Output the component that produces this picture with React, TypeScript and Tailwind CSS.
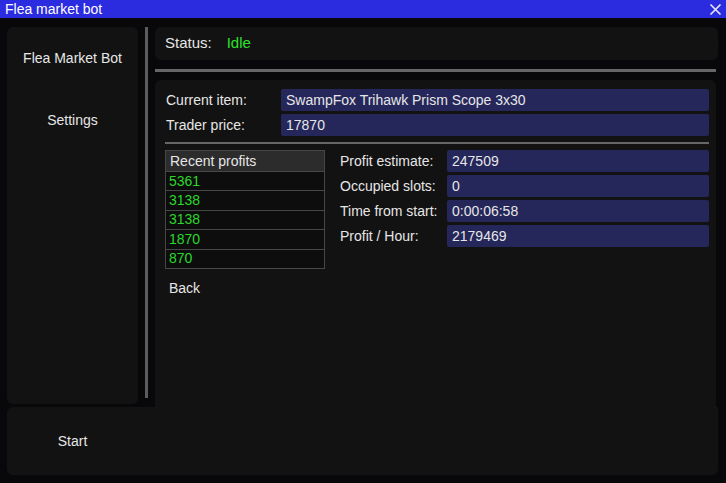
import React from "react";

const recentProfits = ["5361", "3138", "3138", "1870", "870"];

const stats = [
  { label: "Profit estimate:", value: "247509" },
  { label: "Occupied slots:", value: "0" },
  { label: "Time from start:", value: "0:00:06:58" },
  { label: "Profit / Hour:", value: "2179469" },
];

function Field({ value }: { value: string }) {
  return (
    <div className="flex-1 h-full bg-[#25275a] rounded-[2px] flex items-center pl-[5px] text-[14px] text-[#e6e6e6]">
      {value}
    </div>
  );
}

function App() {
  return (
    <div
      className="w-[726px] h-[483px] bg-[#08080a] flex flex-col text-[#e6e6e6] overflow-hidden"
      style={{ fontFamily: '"Liberation Sans", Arial, sans-serif' }}
    >
      {/* title bar */}
      <div className="h-[18px] bg-[#2b2bdf] flex items-center justify-between pl-[5px] pr-[4px]">
        <span className="text-[14px] text-white leading-none">Flea market bot</span>
        <svg width="13" height="13" viewBox="0 0 13 13">
          <path d="M1.5 1.5 L11.5 11.5 M11.5 1.5 L1.5 11.5" stroke="#e8e8f8" strokeWidth="1.6" />
        </svg>
      </div>

      <div className="flex-1 flex flex-col pl-[7px] pr-[8px] pt-[9px] pb-[8px]">
        <div className="flex-1 flex">
          {/* sidebar */}
          <div className="w-[131px] mb-[3px] bg-[#121212] rounded-md flex flex-col items-center pt-[23px] text-[14px]">
            <div className="h-[17px] leading-[17px]">Flea Market Bot</div>
            <div className="h-[17px] leading-[17px] mt-[45px]">Settings</div>
          </div>

          <div className="w-[3px] ml-[7px] mr-[7px] mb-[9px] bg-[#5c5c5c]" />

          <div className="flex-1 flex flex-col">
            <div className="h-[33px] bg-[#121212] rounded-md flex items-center pl-[10px] text-[15px]">
              <span>Status:</span>
              <span className="ml-[15px] text-[#2ee02e]">Idle</span>
            </div>

            <div className="h-[3px] mt-[9px] mr-[2px] bg-[#666666]" />

            <div className="flex-1 mt-[8px] mr-[2px] bg-[#121212] rounded-t-md pl-[11px] pr-[7px] pt-[9px] text-[14px]">
              <div className="flex items-center h-[22px]">
                <div className="w-[115px]">Current item:</div>
                <Field value="SwampFox Trihawk Prism Scope 3x30" />
              </div>
              <div className="flex items-center h-[22px] mt-[3px]">
                <div className="w-[115px]">Trader price:</div>
                <Field value="17870" />
              </div>

              <div className="h-[2px] mt-[6px] -ml-[1px] bg-[#666666]" />

              <div className="flex mt-[6px]">
                <div className="w-[160px] -ml-[1px] border border-[#474747]">
                  <div className="h-[20px] bg-[#2c2c2c] flex items-center pl-[4px]">Recent profits</div>
                  {recentProfits.map((p, i) => (
                    <div
                      key={i}
                      className="h-[19.4px] border-t border-[#474747] bg-[#0d0d0d] flex items-center pl-[3px] text-[#2ad82a]"
                    >
                      {p}
                    </div>
                  ))}
                </div>

                <div className="flex-1 ml-[15px] flex flex-col gap-[3px]">
                  {stats.map((s) => (
                    <div key={s.label} className="flex items-center h-[22px]">
                      <div className="w-[107px]">{s.label}</div>
                      <Field value={s.value} />
                    </div>
                  ))}
                </div>
              </div>

              <div className="mt-[11px] pl-[3px] leading-[17px]">Back</div>
            </div>
          </div>
        </div>

        {/* start */}
        <div className="h-[68px] bg-[#121212] rounded-md rounded-tr-none flex items-center text-[14px]">
          <div className="w-[131px] text-center">Start</div>
        </div>
      </div>
    </div>
  );
}

export default App;
